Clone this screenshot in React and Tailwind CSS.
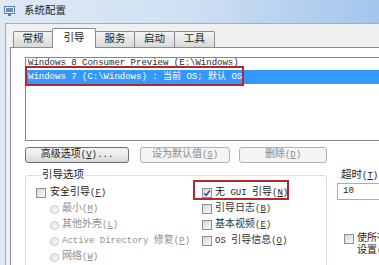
import React from 'react';

// latin runs in the small bitmap-ish size
function L({ children }) {
  return <span className="text-[9px]">{children}</span>;
}

function Key({ k }) {
  return (
    <L>
      (<span className="underline underline-offset-1">{k}</span>)
    </L>
  );
}

function Checkbox({ checked }) {
  return (
    <span className="w-[10px] h-[10px] shrink-0 border border-[#8e8f8f] bg-gradient-to-br from-[#d6d6d6] to-[#fafafa] flex items-center justify-center">
      {checked && (
        <svg width="8" height="8" viewBox="0 0 8 8">
          <path d="M1.2 4.3 L3.2 6.3 L6.9 1.5" fill="none" stroke="#2f4f8f" strokeWidth="1.5" />
        </svg>
      )}
    </span>
  );
}

function Radio() {
  return <span className="w-[9px] h-[9px] shrink-0 rounded-full border border-[#c6c6c6] bg-gradient-to-br from-[#e4e4e4] to-[#fbfbfb]" />;
}

function Tab({ label, active, className }) {
  if (active) {
    return (
      <div className={`h-[20px] w-[44px] border-x border-t border-[#898c95] bg-white rounded-t-[2px] flex justify-center pt-[2px] leading-[14px] ${className}`}>
        {label}
      </div>
    );
  }
  return (
    <div className={`mb-px h-[16px] border-x border-t border-[#898c95] bg-gradient-to-b from-[#f4f4f4] to-[#d9d9d9] rounded-t-[2px] flex items-center justify-center ${className}`}>
      {label}
    </div>
  );
}

export default function App() {
  return (
    <div className="w-[379px] h-[265px] overflow-hidden bg-gradient-to-r from-[#dfe9f5] via-[#cfe0f3] to-[#a3c5ec] text-[#1b1b1b] text-[10.5px] font-['Liberation_Mono','Noto_Sans_CJK_SC',monospace]">
      {/* title bar */}
      <div className="h-[23px] flex items-center">
        <svg className="ml-[4px]" width="12" height="11" viewBox="0 0 12 11">
          <rect x="0.5" y="0.5" width="10" height="7" fill="#e8eef6" stroke="#6b7d95" />
          <rect x="2" y="2" width="7" height="4" fill="#5a8fd0" />
          <rect x="4" y="8" width="3" height="2" fill="#6b7d95" />
        </svg>
        <span className="ml-[8px] text-[10.5px] text-[#1e1e1e]">系统配置</span>
      </div>

      {/* dialog body */}
      <div className="ml-[5px] w-[420px] h-[242px] border-l border-t border-[#9fb0c4] bg-[#f0f0f0] pl-[4px] pt-[4px]">
        <div className="relative z-10 flex items-end h-[20px] pl-[3px]">
          <Tab label="常规" className="w-[40px]" />
          <Tab label="引导" active className="-mx-px" />
          <Tab label="服务" className="w-[40px]" />
          <Tab label="启动" className="w-[41px] -ml-px" />
          <Tab label="工具" className="w-[41px] -ml-px" />
        </div>

        <div className="-mt-px w-[410px] h-[230px] border border-[#898c95] bg-white pl-[14px] pt-[9px]">
          {/* os list */}
          <div className="relative w-[390px] h-[84px] border border-[#828790] bg-white text-[9px]">
            <div className="h-[12px] leading-[10px] pl-[2px] whitespace-pre text-[#2a2a2a]">Windows 8 Consumer Preview (E:\Windows)</div>
            <div className="h-[14px] leading-[14px] pl-[2px] bg-[#3399ff] text-white whitespace-pre">Windows 7 (C:\Windows) : 当前 OS; 默认 OS</div>
            <div className="absolute left-[-1px] top-[8px] w-[219px] h-[20px] border-2 border-[#b5262d]" />
          </div>

          {/* buttons */}
          <div className="mt-[6px] flex text-[10px]">
            <button className="shrink-0 w-[104px] h-[16px] leading-[14px] border border-[#707070] rounded-[3px] bg-gradient-to-b from-[#f3f3f3] via-[#ebebeb] to-[#d6d6d6]">
              高级选项<Key k="V" /><L>...</L>
            </button>
            <button className="shrink-0 ml-[11px] w-[90px] h-[16px] leading-[14px] border border-[#adb2b5] rounded-[3px] bg-[#f4f4f4] text-[#8a8a8a]">
              设为默认值<Key k="S" />
            </button>
            <button className="shrink-0 ml-[9px] w-[88px] h-[16px] leading-[14px] border border-[#adb2b5] rounded-[3px] bg-[#f4f4f4] text-[#8a8a8a]">
              删除<Key k="D" />
            </button>
          </div>

          {/* boot options */}
          <div className="mt-[6px] flex">
            <fieldset className="shrink-0 w-[302px] h-[110px] border border-[#d5dfe5] rounded-[3px] pl-[10px] pt-[4px]">
              <legend className="ml-[5px] px-[1px] leading-[12px]">引导选项</legend>
              <div className="grid grid-cols-[166px_1fr] text-[10px]">
                <div className="flex flex-col">
                  <div className="h-[16px] flex items-center gap-[4px]">
                    <Checkbox />
                    <span>安全引导<Key k="F" /></span>
                  </div>
                  <div className="h-[16px] flex items-center gap-[3px] pl-[14px] text-[#8f8f8f]">
                    <Radio />
                    <span>最小<Key k="M" /></span>
                  </div>
                  <div className="h-[16px] flex items-center gap-[3px] pl-[14px] text-[#8f8f8f]">
                    <Radio />
                    <span>其他外壳<Key k="L" /></span>
                  </div>
                  <div className="h-[16px] flex items-center gap-[3px] pl-[14px] text-[#8f8f8f] whitespace-pre">
                    <Radio />
                    <span><L>Active Directory </L>修复<Key k="P" /></span>
                  </div>
                  <div className="h-[16px] flex items-center gap-[3px] pl-[14px] text-[#8f8f8f]">
                    <Radio />
                    <span>网络<Key k="W" /></span>
                  </div>
                </div>
                <div className="flex flex-col">
                  <div className="relative h-[16px] flex items-center gap-[3px] whitespace-pre">
                    <Checkbox checked />
                    <span>无<L> GUI </L>引导<Key k="N" /></span>
                    <div className="absolute left-[-9px] top-[-5px] w-[96px] h-[20px] border-2 border-[#b5262d]" />
                  </div>
                  <div className="h-[16px] flex items-center gap-[3px] text-[#333]">
                    <Checkbox />
                    <span>引导日志<Key k="B" /></span>
                  </div>
                  <div className="h-[16px] flex items-center gap-[3px] text-[#333]">
                    <Checkbox />
                    <span>基本视频<Key k="E" /></span>
                  </div>
                  <div className="h-[16px] flex items-center gap-[3px] text-[#333] whitespace-pre">
                    <Checkbox />
                    <span><L>OS </L>引导信息<Key k="O" /></span>
                  </div>
                </div>
              </div>
            </fieldset>

            {/* timeout */}
            <div className="shrink-0 ml-[10px] flex flex-col">
              <div className="pl-[4px] leading-[12px]">超时<Key k="T" />:</div>
              <div className="mt-[1px] w-[60px] h-[17px] border border-[#abadb3] pl-[5px] flex items-center text-[9px]">10</div>
              <div className="mt-[33px] pl-[7px] flex items-start gap-[3px] text-[10px]">
                <span className="mt-[1px]"><Checkbox /></span>
                <span className="w-[118px] leading-[12px]">使所有引导设置成为永久设置<Key k="K" /></span>
              </div>
            </div>
          </div>
        </div>
      </div>
    </div>
  );
}
